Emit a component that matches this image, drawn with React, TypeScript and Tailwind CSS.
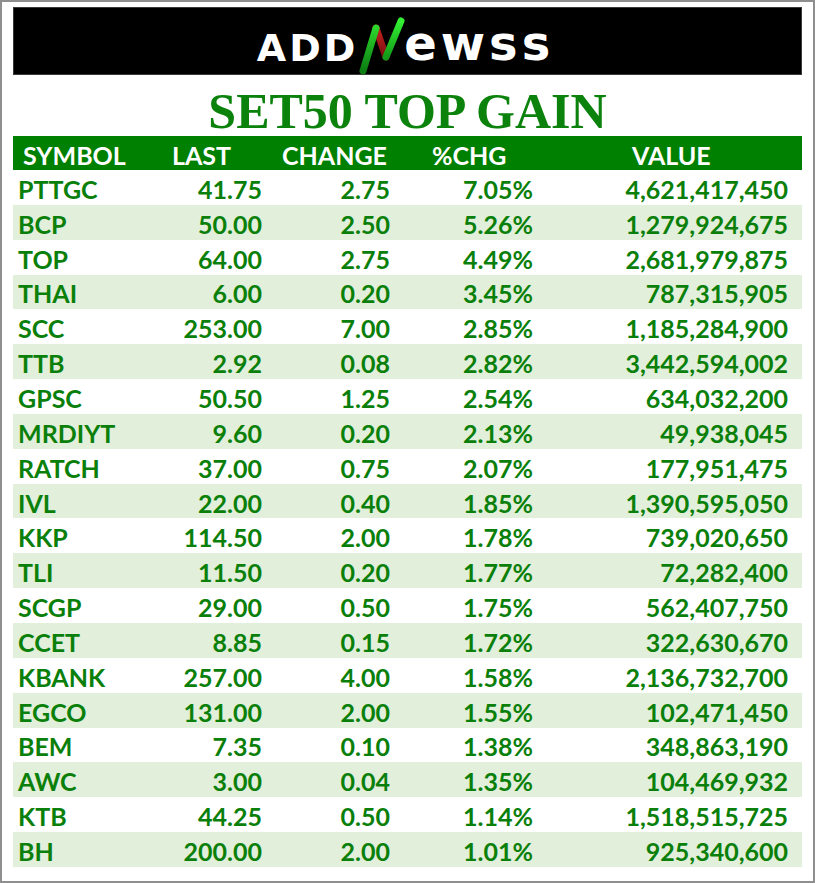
import React from 'react';

type Row = {
  symbol: string;
  last: string;
  change: string;
  pct: string;
  value: string;
};

const rows: Row[] = [
  { symbol: 'PTTGC', last: '41.75', change: '2.75', pct: '7.05%', value: '4,621,417,450' },
  { symbol: 'BCP', last: '50.00', change: '2.50', pct: '5.26%', value: '1,279,924,675' },
  { symbol: 'TOP', last: '64.00', change: '2.75', pct: '4.49%', value: '2,681,979,875' },
  { symbol: 'THAI', last: '6.00', change: '0.20', pct: '3.45%', value: '787,315,905' },
  { symbol: 'SCC', last: '253.00', change: '7.00', pct: '2.85%', value: '1,185,284,900' },
  { symbol: 'TTB', last: '2.92', change: '0.08', pct: '2.82%', value: '3,442,594,002' },
  { symbol: 'GPSC', last: '50.50', change: '1.25', pct: '2.54%', value: '634,032,200' },
  { symbol: 'MRDIYT', last: '9.60', change: '0.20', pct: '2.13%', value: '49,938,045' },
  { symbol: 'RATCH', last: '37.00', change: '0.75', pct: '2.07%', value: '177,951,475' },
  { symbol: 'IVL', last: '22.00', change: '0.40', pct: '1.85%', value: '1,390,595,050' },
  { symbol: 'KKP', last: '114.50', change: '2.00', pct: '1.78%', value: '739,020,650' },
  { symbol: 'TLI', last: '11.50', change: '0.20', pct: '1.77%', value: '72,282,400' },
  { symbol: 'SCGP', last: '29.00', change: '0.50', pct: '1.75%', value: '562,407,750' },
  { symbol: 'CCET', last: '8.85', change: '0.15', pct: '1.72%', value: '322,630,670' },
  { symbol: 'KBANK', last: '257.00', change: '4.00', pct: '1.58%', value: '2,136,732,700' },
  { symbol: 'EGCO', last: '131.00', change: '2.00', pct: '1.55%', value: '102,471,450' },
  { symbol: 'BEM', last: '7.35', change: '0.10', pct: '1.38%', value: '348,863,190' },
  { symbol: 'AWC', last: '3.00', change: '0.04', pct: '1.35%', value: '104,469,932' },
  { symbol: 'KTB', last: '44.25', change: '0.50', pct: '1.14%', value: '1,518,515,725' },
  { symbol: 'BH', last: '200.00', change: '2.00', pct: '1.01%', value: '925,340,600' },
];

const cols = 'grid grid-cols-[150px_100px_128px_143px_1fr]';

function LogoN() {
  return (
    <svg width="46" height="62" viewBox="0 0 46 62" className="mx-[1px] -mb-[11px]">
      <defs>
        <linearGradient id="gLeft" x1="0" y1="1" x2="0" y2="0">
          <stop offset="0" stopColor="#0b7d12" />
          <stop offset="1" stopColor="#2bd62b" />
        </linearGradient>
        <linearGradient id="gRight" x1="0" y1="1" x2="0" y2="0">
          <stop offset="0" stopColor="#129a18" />
          <stop offset="1" stopColor="#33f033" />
        </linearGradient>
        <linearGradient id="gRed" x1="0" y1="0" x2="0" y2="1">
          <stop offset="0" stopColor="#c42020" />
          <stop offset="1" stopColor="#7a1010" />
        </linearGradient>
      </defs>
      <line x1="17" y1="12" x2="27" y2="41" stroke="url(#gRed)" strokeWidth="7" strokeLinecap="round" />
      <line x1="4" y1="55" x2="17" y2="12" stroke="url(#gLeft)" strokeWidth="7" strokeLinecap="round" />
      <line x1="27" y1="41" x2="42" y2="5" stroke="url(#gRight)" strokeWidth="7" strokeLinecap="round" />
    </svg>
  );
}

export default function App() {
  return (
    <div className="w-[815px] h-[883px] border-2 border-[#8f8f8f] bg-white px-[11px] pt-[5px] font-['Lato',sans-serif] font-bold text-[#0a800a]">
      {/* Logo bar */}
      <div className="h-[68px] bg-black border border-[#3a3a3a] flex items-center justify-center pr-[4px]">
        <div className="flex items-end text-white font-['DejaVu_Sans',sans-serif] font-bold leading-none">
          <span className="text-[38px] tracking-[3px]">ADD</span>
          <LogoN />
          <span className="text-[48px] tracking-[4px] -ml-[2px]">ewss</span>
        </div>
      </div>

      {/* Title */}
      <div className="h-[61px] flex items-center justify-center pt-[10px]">
        <h1 className="font-['Liberation_Serif',serif] font-bold text-[50px] leading-none text-[#0b820b]">
          SET50 TOP GAIN
        </h1>
      </div>

      {/* Header */}
      <div className={`${cols} h-[34px] bg-[#008000] text-white text-[25px] leading-none items-center pt-[4px]`}>
        <div className="pl-[10px]">SYMBOL</div>
        <div className="pl-[9px]">LAST</div>
        <div className="pl-[19px]">CHANGE</div>
        <div className="pl-[41px]">%CHG</div>
        <div className="pl-[98px]">VALUE</div>
      </div>

      {/* Rows */}
      {rows.map((r, i) => (
        <div
          key={r.symbol}
          className={`${cols} h-[34.85px] text-[25px] leading-none items-center pt-[4px] ${i % 2 === 1 ? 'bg-[#e2efda]' : 'bg-white'}`}
        >
          <div className="pl-[5px]">{r.symbol}</div>
          <div className="text-right pr-[1px]">{r.last}</div>
          <div className="text-right pr-[1px]">{r.change}</div>
          <div className="text-right pr-[1px]">{r.pct}</div>
          <div className="text-right pr-[14px]">{r.value}</div>
        </div>
      ))}
    </div>
  );
}
